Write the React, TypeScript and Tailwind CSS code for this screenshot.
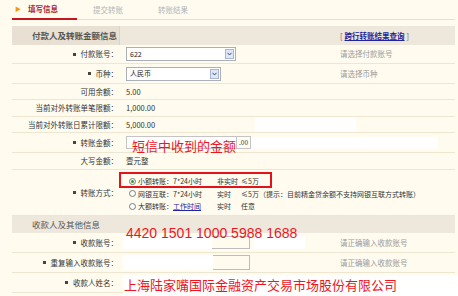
import React from 'react'

const cjk = "font-['Noto_Sans_CJK_SC',sans-serif]"

const Bullet = () => <span className="mr-[5px] inline-block h-[3px] w-[3px] bg-[#444]"></span>

type RowProps = {
    label: string
    req?: boolean
    h: string
    hint?: string
    children?: React.ReactNode
}

const Row: React.FC<RowProps> = ({ label, req, h, hint, children }) => (
    <div className={`flex border-b border-[#efe6d2] ${h}`}>
        <div className="flex w-[108px] shrink-0 items-center justify-end pr-[2px] text-[7.5px] text-[#333]">
            {req && <Bullet />}
            <span>{label}：</span>
        </div>
        <div className="flex w-[220px] shrink-0 items-center pl-[6px] text-[7.5px] text-[#333]">{children}</div>
        {hint && <div className="flex items-center text-[7.5px] text-[#9a9a9a]">{hint}</div>}
    </div>
)

const SelectBox: React.FC<{ w: string; text: string }> = ({ w, text }) => (
    <div className={`flex h-[14px] shrink-0 items-center justify-between border border-[#a9b0b8] bg-white pl-[3px] pr-[1px] ${w}`}>
        <span className="text-[7px] text-[#222]">{text}</span>
        <span className="flex h-[10px] w-[9px] items-center justify-center border border-[#a8b6d2] bg-[#dfe7f6]">
            <svg width="5" height="4" viewBox="0 0 5 4">
                <path d="M0.5 0.8 L2.5 3 L4.5 0.8" fill="none" stroke="#3b4f7a" strokeWidth="1" />
            </svg>
        </span>
    </div>
)

const Radio: React.FC<{ on?: boolean }> = ({ on }) => (
    <span className="mr-[2px] flex h-[7px] w-[7px] shrink-0 items-center justify-center rounded-full border border-[#7a7a7a] bg-white">
        {on && <span className="h-[3px] w-[3px] rounded-full bg-[#2f9b2f]"></span>}
    </span>
)

const App: React.FC = () => {
    return (
        <div className={`relative h-[296px] w-[458px] overflow-hidden bg-[#fffcef] ${cjk}`}>
            {/* tabs */}
            <div className="ml-[12px] mr-[3px] flex h-[20px] items-stretch border-b border-[#e9dfc9]">
                <div className="-mb-px flex w-[65px] items-center border-b-2 border-[#c4161c] pl-[3px]">
                    <span className="text-[6px] leading-none text-[#f29b00]">▶</span>
                    <span className="ml-[7px] text-[7.5px] font-bold text-[#b0262a]">填写信息</span>
                </div>
                <div className="ml-[16px] flex items-center text-[7.5px] text-[#b3b3b3]">提交转账</div>
                <div className="ml-[35px] flex items-center text-[7.5px] text-[#b3b3b3]">转账结果</div>
            </div>

            <div className="ml-[12px] mr-[3px] mt-[6px] flex flex-col">
                {/* header 1 */}
                <div className="flex h-[19px] bg-[#ede7dc]">
                    <div className="flex w-[108px] items-center border-r border-[#ddd4c4] bg-[#e7e0d3] pl-[20px] text-[8.5px] font-bold text-[#555]">
                        付款人及转账金额信息
                    </div>
                    <div className="flex flex-1 items-center pl-[220px] text-[7.5px] text-[#666]">
                        <span>[</span>
                        <span className="mx-[2px] font-bold text-[#23239c] underline">跨行转账结果查询</span>
                        <span>]</span>
                    </div>
                </div>

                <Row label="付款账号" req h="h-[19px]" hint="请选择付款账号">
                    <SelectBox w="w-[110px]" text="622" />
                </Row>
                <Row label="币种" req h="h-[20px]" hint="请选择币种">
                    <SelectBox w="w-[95px]" text="人民币" />
                </Row>
                <Row label="可用余额" h="h-[16px]">5.00</Row>
                <Row label="当前对外转账单笔限额" h="h-[17px]">1,000.00</Row>
                <Row label="当前对外转账日累计限额" h="h-[16px]">
                    <span className="w-[129px] shrink-0">5,000.00</span>
                    <span className="h-[15px] w-[101px] shrink-0 bg-white"></span>
                </Row>
                <Row label="转账金额" req h="h-[20px]">
                    <span className="h-[13px] w-[111px] shrink-0 border border-[#c4c4c4] bg-white"></span>
                    <span className="flex h-[13px] w-[14px] shrink-0 items-center justify-center border border-l-0 border-[#c4c4c4] text-[6.5px]">.00</span>
                    <span className="h-[12px] w-[187px] shrink-0 bg-white"></span>
                </Row>
                <Row label="大写金额" h="h-[17px]">壹元整</Row>

                <div className="flex h-[46px] border-b border-[#efe6d2]">
                    <div className="flex w-[108px] shrink-0 items-center justify-end pr-[2px] text-[7.5px] text-[#333]">
                        <Bullet />
                        <span>转账方式：</span>
                    </div>
                    <div className="flex flex-col pl-[9px] pt-[5px] text-[7px] text-[#333]">
                        <div className="flex h-[12.5px] items-center">
                            <Radio on />
                            <span className="w-[79px] shrink-0 whitespace-nowrap">小额转账：7*24小时</span>
                            <span className="w-[24px] shrink-0 whitespace-nowrap">非实时</span>
                            <span>≤5万</span>
                        </div>
                        <div className="flex h-[12.5px] items-center">
                            <Radio />
                            <span className="w-[79px] shrink-0 whitespace-nowrap">网银互联：7*24小时</span>
                            <span className="w-[24px] shrink-0">实时</span>
                            <span className="whitespace-nowrap">≤5万（提示：目前精金贷余额不支持网银互联方式转账）</span>
                        </div>
                        <div className="flex h-[12.5px] items-center">
                            <Radio />
                            <span className="w-[79px] shrink-0 whitespace-nowrap">
                                大额转账：<span className="text-[#2323a8] underline">工作时间</span>
                            </span>
                            <span className="w-[24px] shrink-0">实时</span>
                            <span>任意</span>
                        </div>
                    </div>
                </div>

                {/* header 2 */}
                <div className="flex h-[17px] items-center bg-[#ede7dc] pl-[20px] text-[8.5px] text-[#555]">收款人及其他信息</div>

                <Row label="收款账号" req h="h-[20px]" hint="请正确输入收款账号">
                    <span className="-ml-[3px] h-[13px] w-[89px] shrink-0 bg-white"></span>
                    <span className="h-[13px] w-[38px] shrink-0 border border-l-0 border-[#bdbdbd]"></span>
                    <span className="ml-[3px] h-[13px] w-[52px] shrink-0 bg-white"></span>
                </Row>
                <Row label="重复输入收款账号" req h="h-[20px]" hint="请正确输入收款账号">
                    <span className="-ml-[3px] h-[15px] w-[90px] shrink-0 bg-white"></span>
                    <span className="h-[15px] w-[37px] shrink-0 border border-l-0 border-[#bdbdbd]"></span>
                </Row>
                <Row label="收款人姓名" req h="h-[20px]"></Row>
            </div>

            {/* annotations drawn over the form */}
            <div className="pointer-events-none absolute left-[119px] top-[172px] h-[16px] w-[153px] border-2 border-[#e3131b]"></div>
            <div className="absolute left-[132px] top-[139px] text-[13px] leading-none text-[#f0141e]">短信中收到的金额</div>
            <div className="absolute left-[126px] top-[226px] font-['Liberation_Sans',sans-serif] text-[14px] leading-none text-[#f0141e]">
                4420 1501 1000 5988 1688
            </div>
            <div className="absolute left-[123px] top-[275px] h-[21px] w-[335px] bg-white pl-[1px] pt-[3px] text-[13px] leading-none text-[#f0141e]">
                上海陆家嘴国际金融资产交易市场股份有限公司
            </div>
        </div>
    )
}

export default App
